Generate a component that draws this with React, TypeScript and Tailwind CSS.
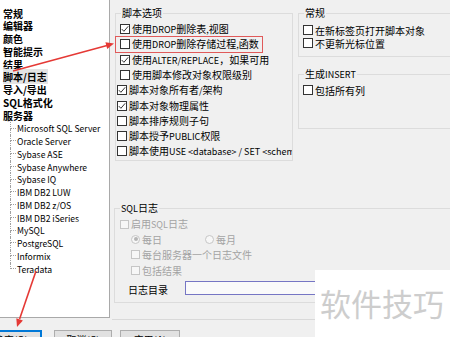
import React from "react";

const isLatin = (s: string) => /^[\x20-\x7e]+$/.test(s);

function Mixed({ text }: { text: string }) {
  const parts = text.split(/([\x20-\x7e]+)/).filter((p) => p.length > 0);
  return (
    <>
      {parts.map((p, i) =>
        isLatin(p) ? (
          <span key={i} className="text-[9px]">
            {p}
          </span>
        ) : (
          <span key={i}>{p}</span>
        )
      )}
    </>
  );
}

function Box({ checked, disabled }: { checked?: boolean; disabled?: boolean }) {
  return (
    <span
      className={
        disabled
          ? "w-[9px] h-[9px] shrink-0 border border-[#c6c6c6] bg-[#f7f7f7] flex items-center justify-center"
          : "w-[10px] h-[10px] shrink-0 border border-[#333333] bg-white flex items-center justify-center"
      }
    >
      {checked && (
        <svg width="8" height="8" viewBox="0 0 8 8">
          <path d="M0.8 4.1 L2.9 6.3 L7.2 1.3" fill="none" stroke="#333333" strokeWidth="1" />
        </svg>
      )}
    </span>
  );
}

function Radio({ checked }: { checked?: boolean }) {
  return (
    <span className="w-[9px] h-[9px] shrink-0 rounded-full border border-[#c6c6c6] bg-[#f7f7f7] flex items-center justify-center">
      {checked && <span className="w-[4px] h-[4px] rounded-full bg-[#b5b5b5]" />}
    </span>
  );
}

const parents = ["常规", "编辑器", "颜色", "智能提示", "结果", "脚本/日志", "导入/导出", "SQL格式化", "服务器"];
const children = [
  "Microsoft SQL Server",
  "Oracle Server",
  "Sybase ASE",
  "Sybase Anywhere",
  "Sybase IQ",
  "IBM DB2 LUW",
  "IBM DB2 z/OS",
  "IBM DB2 iSeries",
  "MySQL",
  "PostgreSQL",
  "Informix",
  "Teradata",
];

function Tree() {
  return (
    <div className="w-[110px] h-[318px] shrink-0 bg-white border-r border-b border-[#a9a9a9] pt-[7.6px]">
      {parents.map((p) => (
        <div key={p} className="h-[12.75px] leading-[12.75px] pl-[3px] font-bold text-[10px] whitespace-nowrap">
          <span className={p === "脚本/日志" ? "bg-[#e4e4e4] pr-[1px]" : ""}>{p}</span>
        </div>
      ))}
      {children.map((c, i) => (
        <div key={c} className="h-[12.75px] flex items-stretch">
          <div className="ml-[10px] w-[6px] flex flex-col shrink-0">
            <div className="h-[6.4px] border-l border-b border-dotted border-[#a0a0a0]" />
            <div className={i === children.length - 1 ? "flex-1" : "flex-1 border-l border-dotted border-[#a0a0a0]"} />
          </div>
          <span className="pl-[1px] leading-[12.75px] text-[8.6px] whitespace-nowrap">{c}</span>
        </div>
      ))}
    </div>
  );
}

const options: [string, boolean, boolean][] = [
  ["使用DROP删除表,视图", true, true],
  ["使用DROP删除存储过程,函数", false, true],
  ["使用ALTER/REPLACE，如果可用", true, true],
  ["使用脚本修改对象权限级别", false, true],
  ["脚本对象所有者/架构", true, false],
  ["脚本对象物理属性", true, false],
  ["脚本排序规则子句", false, false],
  ["脚本授予PUBLIC权限", false, false],
  ["脚本使用USE <database> / SET <schema>", false, false],
];

export default function App() {
  return (
    <div className="relative w-[450px] h-[337px] overflow-hidden bg-[#f0f0f0] text-black font-['Noto_Sans_CJK_SC','Noto_Sans',sans-serif] text-[10px]">
      <div className="flex h-[319px]">
        <Tree />
        <div className="flex-1 min-w-0">
          <div className="flex items-start mt-[7px]">
            <fieldset className="ml-[5px] w-[178px] h-[154px] min-w-0 shrink-0 border border-[#dcdcdc] pt-[2.4px]">
              <legend className="ml-[5px] px-[1px] leading-[12px]">脚本选项</legend>
              {options.map(([t, c, indent]) => (
                <div
                  key={t}
                  className={
                    indent
                      ? "h-[15.3px] flex items-center gap-[2px] ml-[4px] pr-[2px] overflow-hidden whitespace-nowrap"
                      : "h-[15.3px] flex items-center gap-[2px] ml-[1px] pr-[2px] overflow-hidden whitespace-nowrap"
                  }
                >
                  <Box checked={c} />
                  <span className="leading-[13px]">
                    <Mixed text={t} />
                  </span>
                </div>
              ))}
            </fieldset>
            <div className="ml-[5px] flex flex-col shrink-0">
              <fieldset className="w-[170px] h-[50px] min-w-0 border border-[#dcdcdc] pt-[4.5px]">
                <legend className="ml-[5px] px-[1px] leading-[12px]">常规</legend>
                {["在新标签页打开脚本对象", "不更新光标位置"].map((t) => (
                  <div key={t} className="h-[13px] flex items-center gap-[2px] ml-[4px] whitespace-nowrap">
                    <Box />
                    <span className="leading-[13px]">{t}</span>
                  </div>
                ))}
              </fieldset>
              <fieldset className="mt-[11px] w-[170px] h-[61px] min-w-0 border border-[#dcdcdc] pt-[2.5px]">
                <legend className="ml-[5px] px-[1px] leading-[12px]">
                  <Mixed text="生成INSERT" />
                </legend>
                <div className="h-[13px] flex items-center gap-[2px] ml-[4px] whitespace-nowrap">
                  <Box />
                  <span className="leading-[13px]">包括所有列</span>
                </div>
              </fieldset>
            </div>
          </div>
          <fieldset className="mt-[41px] ml-[4px] w-[345px] h-[101px] min-w-0 border border-[#dcdcdc] pt-[1.5px] text-[#a3a3a3]">
            <legend className="ml-[5px] px-[1px] leading-[12px] text-black">
              <Mixed text="SQL日志" />
            </legend>
            <div className="h-[15px] flex items-center gap-[2px] ml-[5px] whitespace-nowrap">
              <Box disabled />
              <span className="leading-[13px]">
                <Mixed text="启用SQL日志" />
              </span>
            </div>
            <div className="h-[15px] flex items-center ml-[16px] whitespace-nowrap">
              <span className="w-[74px] flex items-center gap-[2px]">
                <Radio checked />
                <span className="leading-[13px]">每日</span>
              </span>
              <span className="flex items-center gap-[2px]">
                <Radio />
                <span className="leading-[13px]">每月</span>
              </span>
            </div>
            <div className="h-[15px] flex items-center gap-[2px] ml-[16px] whitespace-nowrap">
              <Box disabled />
              <span className="leading-[13px]">每台服务器一个日志文件</span>
            </div>
            <div className="mt-[1px] h-[15px] flex items-center gap-[2px] ml-[16px] whitespace-nowrap">
              <Box disabled />
              <span className="leading-[13px]">包括结果</span>
            </div>
            <div className="mt-[3.5px] h-[14px] flex items-center ml-[13px] whitespace-nowrap">
              <span className="w-[57px] leading-[13px] text-black pt-[3px]">日志目录</span>
              <span className="w-[200px] h-[14px] border border-[#7676c4] bg-[#fafafa]" />
            </div>
          </fieldset>
        </div>
      </div>
      <div className="ml-[112px] h-px bg-[#d9d9d9]" />
      <div className="mt-[10px] flex items-start">
        <button className="-ml-[20px] w-[62px] h-[23px] border-2 border-[#0078d7] bg-[#e1e1e1] text-[10px] leading-[14px] pt-[1px] flex justify-center">
          确定(O)
        </button>
        <button className="ml-[12px] w-[58px] h-[23px] border border-[#adadad] bg-[#e1e1e1] text-[10px] leading-[14px] pt-[2px] flex justify-center">
          取消(C)
        </button>
        <button className="ml-[8px] w-[60px] h-[23px] border border-[#adadad] bg-[#e1e1e1] text-[10px] leading-[14px] pt-[2px] flex justify-center">
          应用(A)
        </button>
      </div>

      {/* annotation overlays */}
      <div className="absolute left-[115px] top-[36px] w-[148px] h-[17px] border border-[#e05a5a]" />
      <svg className="absolute left-0 top-0 pointer-events-none" width="450" height="337" viewBox="0 0 450 337">
        <line x1="13" y1="71" x2="107" y2="45.5" stroke="#e53935" strokeWidth="1.6" />
        <polygon points="114,43.5 107.2,49 105.4,42.2" fill="#e53935" />
        <line x1="36" y1="271" x2="19.6" y2="319" stroke="#e53935" strokeWidth="1.6" />
        <polygon points="17,327 22.9,320.5 16.3,318.3" fill="#e53935" />
      </svg>
      <div className="absolute left-[315px] top-[270px] w-[135px] h-[67px] bg-white pl-[5px] pt-[13px]">
        <span className="text-[31px] leading-[40px] text-[#cdcdcd] whitespace-nowrap">软件技巧</span>
      </div>
    </div>
  );
}
